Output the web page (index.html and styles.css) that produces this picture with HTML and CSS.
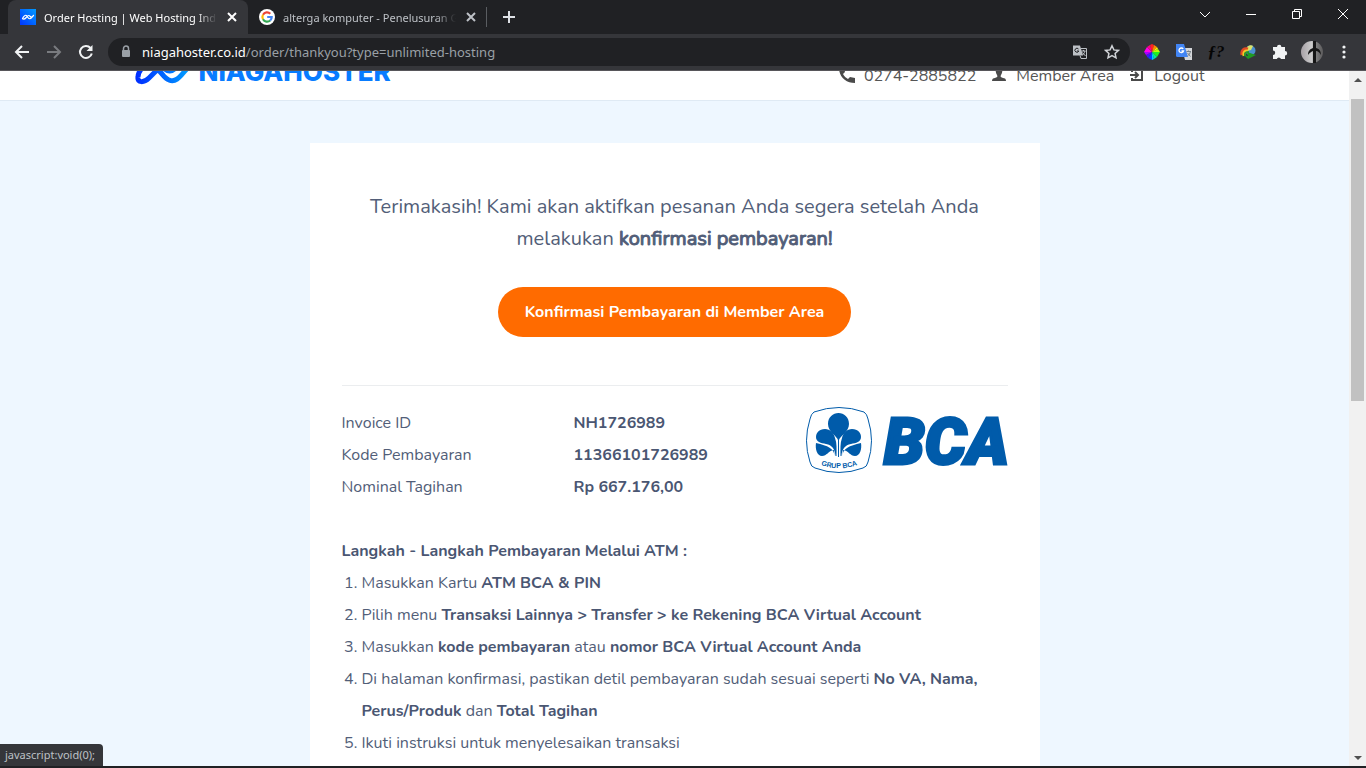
FILE: index.html
```html
<!DOCTYPE html>
<html lang="id">
<head>
<meta charset="utf-8">
<meta name="viewport" content="width=device-width, initial-scale=1">
<title>Order Hosting | Web Hosting Indonesia</title>
<link rel="stylesheet" href="styles.css">
</head>
<body>
<div class="browser">
  <header class="tabstrip">
    <div class="tab tab-active">
      <svg class="favicon" viewBox="0 0 16 16" aria-hidden="true"><defs><linearGradient id="fav" x1="0" y1="1" x2="1" y2="0"><stop offset="0" stop-color="#0034ff"/><stop offset="1" stop-color="#009bff"/></linearGradient></defs><path fill="url(#fav)" d="M0 0h16v16H0z"/><path d="M2.500 9.800c.6-1.700 2.600-4.200 3.800-3.400s1.700 3.700 3.600 3.300c1.500-.4 2.300-2 3.600-3.200M2.500 9.800c1.600 1.100 2.900-.3 3.800-1.300s1.500-2.700 3-1.800c1.200.7 2.600 2.600 4.200-.2" fill="none" stroke="#fff" stroke-width="1.200" stroke-linecap="round"/></svg>
      <span class="tab-title">Order Hosting | Web Hosting Indonesia</span>
      <button class="tab-close" aria-label="Close tab"><svg viewBox="0 0 10 10"><path d="M1 1l8 8M9 1L1 9"/></svg></button>
    </div>
    <div class="tab tab-idle">
      <svg class="favicon" viewBox="0 0 16 16" aria-hidden="true"><circle cx="8" cy="8" r="8" fill="#fff"/><g fill="none" stroke-width="2.200"><path stroke="#ea4335" d="M4 5.700A4.700 4.700 0 0 1 11.300 4.700"/><path stroke="#fbbc05" d="M4 10.300A4.700 4.700 0 0 1 4 5.700"/><path stroke="#34a853" d="M11.200 11.500A4.700 4.700 0 0 1 4 10.300"/><path stroke="#4285f4" d="M8.200 8H12.700A4.700 4.700 0 0 1 11.200 11.500"/></g></svg>
      <span class="tab-title">alterga komputer - Penelusuran Google</span>
      <button class="tab-close" aria-label="Close tab"><svg viewBox="0 0 10 10"><path d="M1 1l8 8M9 1L1 9"/></svg></button>
    </div>
    <button class="new-tab" aria-label="New tab"><svg viewBox="0 0 12 12"><path d="M6 0v12M0 6h12"/></svg></button>
    <div class="window-controls">
      <button aria-label="Search tabs"><svg viewBox="0 0 12 12"><path d="M1 4l5 5 5-5"/></svg></button>
      <button aria-label="Minimize"><svg viewBox="0 0 12 12"><path d="M1 6.500h10"/></svg></button>
      <button aria-label="Restore"><svg viewBox="0 0 12 12"><path d="M1.500 3.500h7v7h-7zM3.500 3.500v-2h7v7h-2"/></svg></button>
      <button aria-label="Close"><svg viewBox="0 0 12 12"><path d="M1 1l10 10M11 1L1 11"/></svg></button>
    </div>
  </header>

  <div class="toolbar">
    <button class="nav-button" aria-label="Back"><svg viewBox="0 0 16 16"><path d="M15 8H2M8 2L2 8l6 6"/></svg></button>
    <button class="nav-button nav-disabled" aria-label="Forward"><svg viewBox="0 0 16 16"><path d="M1 8h13M8 2l6 6-6 6"/></svg></button>
    <button class="nav-button" aria-label="Reload"><svg viewBox="0 0 16 16"><path d="M13.800 9.500A6 6 0 1 1 12.500 4"/><path class="solid" d="M14.500 1v6h-6z"/></svg></button>
    <div class="omnibox">
      <svg class="lock" viewBox="0 0 10 14" aria-hidden="true"><path d="M2.500 6V3.500a2.500 2.500 0 0 1 5 0V6" fill="none" stroke="#9aa0a6" stroke-width="1.500"/><rect x="1" y="5" width="8" height="7" rx="1" fill="#9aa0a6"/></svg>
      <div class="url"><span class="host">niagahoster.co.id</span>/order/thankyou?type=unlimited-hosting</div>
      <button class="omni-button" aria-label="Translate"><svg viewBox="0 0 16 16"><path d="M9 4.500h5.500v10H9l-1-3" fill="none" stroke="#bdc1c6"/><path fill="#bdc1c6" d="M1 1.500h7l3 10H1z"/><path d="M6.500 5a2 2 0 1 0 .3 2H5" fill="none" stroke="#202124"/><path d="M9.500 7h4M11.500 6v1M13 7c-.5 2-1.500 3-2.500 4M10.500 8.500l3 3.500" fill="none" stroke="#bdc1c6"/></svg></button>
      <button class="omni-button" aria-label="Bookmark"><svg viewBox="0 0 16 16"><path fill="none" stroke="#d0d3d7" stroke-width="1.500" d="M8 1.800l1.900 4.100 4.500.5-3.300 3 .9 4.500L8 11.700l-4 2.200.9-4.500-3.300-3 4.500-.5z"/></svg></button>
    </div>
    <div class="extensions">
      <button aria-label="Color picker"><svg viewBox="0 0 16 16"><path fill="#f22" d="M8 8L6 1l2-1 2 1z"/><path fill="#f80" d="M8 8l2-7 3 2z"/><path fill="#fe0" d="M8 8l5-5 1 2z"/><path fill="#bf0" d="M8 8l6-3 2 3z"/><path fill="#2e2" d="M8 8h8l-3 5z"/><path fill="#0e9" d="M8 8l5 5-3 2z"/><path fill="#0cf" d="M8 8l2 7-2 1z"/><path fill="#04f" d="M8 8v8l-4-2z"/><path fill="#41f" d="M8 8l-4 6-2-3z"/><path fill="#a0f" d="M8 8l-6 3-2-3z"/><path fill="#f0e" d="M8 8H0l3-5z"/><path fill="#f08" d="M8 8L3 3l3-2z"/></svg></button>
      <button aria-label="Google Translate"><svg viewBox="0 0 16 16"><path fill="#d5d7da" d="M6 4h10v12H9z"/><path fill="#4285f4" d="M0 0h8l4 13H1.500Q0 13 0 11.500z"/><path d="M7.200 5A2.300 2.300 0 1 0 7.500 7H5.500" fill="none" stroke="#fff" stroke-width="1.300"/><path d="M10.500 7.500H15M12.500 6.500v1M14.500 7.500c-.5 2-1.500 3.500-3 4.500M11.500 9l3 3.500" fill="none" stroke="#78828a"/></svg></button>
      <button class="font-finder" aria-label="Font finder">ƒ?</button>
      <button aria-label="Download manager"><svg viewBox="0 0 16 16"><circle cx="10.500" cy="6.500" r="5" fill="#4a8fd0"/><path fill="#d8e36a" d="M7 3c2-2 5-2 6-1l-2 4-4 1z"/><path d="M2 11C1 6 4 4 8 5" fill="none" stroke="#e24b24" stroke-width="3"/><path d="M3.500 12C2.500 8 4.500 6 8 6.500" fill="none" stroke="#f5cb23" stroke-width="2"/><path d="M5 12C4.500 9.500 6 8 9 8" fill="none" stroke="#2b9a32" stroke-width="2"/><path fill="#1f9a22" d="M4 11l4 1-1-4 9 3-8 4z"/></svg></button>
      <button aria-label="Extensions"><svg viewBox="0 0 16 16"><path fill="#f1f3f4" d="M1 3h4a2.200 2.200 0 1 1 4.400 0H13v4a2.200 2.200 0 1 1 0 4.400V15H9a2.200 2.200 0 0 0-4.200 0H1v-4a2.200 2.200 0 0 0 0-4.400z"/></svg></button>
      <button class="avatar" aria-label="Profile"><svg viewBox="0 0 22 22"><defs><linearGradient id="av"><stop offset="0" stop-color="#a7a1a6"/><stop offset=".5" stop-color="#ccc"/><stop offset=".6" stop-color="#888"/><stop offset="1" stop-color="#5b5a5b"/></linearGradient></defs><circle cx="11" cy="11" r="11" fill="url(#av)"/><path d="M12 0h3v7c4 1 5 4 5 7-2-3-3-4-5-4v12h-3V10c-2 1-4 2-5 4 0-4 2-6 5-7z" fill="#161616"/></svg></button>
      <button aria-label="Menu"><svg viewBox="0 0 16 16"><g fill="#f1f3f4"><circle cx="8" cy="3" r="1.600"/><circle cx="8" cy="8" r="1.600"/><circle cx="8" cy="13" r="1.600"/></g></svg></button>
    </div>
  </div>

  <div class="viewport">
    <div class="page">
      <header class="site-header">
        <div class="site-bar">
          <a class="brand" href="#" aria-label="Niagahoster">
            <svg class="brand-mark" viewBox="0 0 54 32" aria-hidden="true"><defs><linearGradient id="mark"><stop offset="0" stop-color="#0030ff"/><stop offset="1" stop-color="#009dff"/></linearGradient></defs><path d="M3 21C2 27 9 27 14 22L21 15C25 12 28 22 34 24C43 28 48 15 54 11M3 21C3 14 12 6 18 6C25 5 29 16 35 15C40 15 42 9 47 6" fill="none" stroke="url(#mark)" stroke-width="5"/></svg>
            <span>NIAGAHOSTER</span>
          </a>
          <nav class="site-nav">
            <a href="#"><svg viewBox="0 0 16 16"><path d="M0 0C0 9 7 15 16 15v-5l-5-1-2 2C7 10 5 8 4 6l2-2-1-4z"/></svg>0274-2885822</a>
            <a href="#"><svg viewBox="0 0 16 16"><path d="M8 0c-4 0-4 4-2 7 1 2 0 2-2 3-2 0-3 1-3 3h14c0-2-1-3-3-3-2-1-3-1-2-3 2-3 2-7-2-7z"/></svg>Member Area</a>
            <a href="#"><svg viewBox="0 0 16 16"><path class="line" d="M3 4V1h10v11H3v-2M1 7h8M6 4l3 3-3 3"/></svg>Logout</a>
          </nav>
        </div>
      </header>

      <main class="card">
        <p class="thanks">Terimakasih! Kami akan aktifkan pesanan Anda segera setelah Anda melakukan <strong>konfirmasi pembayaran!</strong></p>
        <button class="confirm">Konfirmasi Pembayaran di Member Area</button>
        <section class="invoice">
          <table>
            <tr><th scope="row">Invoice ID</th><td>NH1726989</td></tr>
            <tr><th scope="row">Kode Pembayaran</th><td>11366101726989</td></tr>
            <tr><th scope="row">Nominal Tagihan</th><td>Rp 667.176,00</td></tr>
          </table>
          <svg class="bank" viewBox="0 0 202 68" role="img" aria-label="BCA">
            <path d="M8 5Q33-4 58 5Q61 7 62 12Q69 34 62 55Q61 60 57 61Q33 70 9 61Q5 60 4 55Q-3 34 4 12Q5 7 8 5z" fill="#fff" stroke="#005baa"/>
            <g fill="#005baa">
              <path d="M32 50V33C31 29 22 25 22 17C22 10 27 6 32.500 6S43 10 43 17C43 25 34 29 33 33V50z"/>
              <path d="M30.500 49C30.500 42 31 36 29 31C28 26 24 22 19 22C13 22 10 26 10 30C10 35 15 36 20 37C26 38 29 42 29.500 49z"/>
              <path d="M34.500 49C34.500 42 34 36 36 31C37 26 41 22 46 22C52 22 55 26 55 30C55 35 50 36 45 37C39 38 36 42 35.500 49z"/>
              <path d="M28.500 49C28 41 22 39 10 36C9 42 11 49 16 49C21 49 22 44 28 43z"/>
              <path d="M36.500 49C37 41 43 39 55 36C56 42 54 49 49 49C44 49 43 44 37 43z"/>
            </g>
            <path id="arc" d="M15 58Q33 65 54 57" fill="none"/>
            <text class="group-name"><textPath href="#arc">GRUP BCA</textPath></text>
            <text class="bank-name" x="78" y="57">BCA</text>
          </svg>
        </section>
        <h2>Langkah - Langkah Pembayaran Melalui ATM :</h2>
        <ol>
          <li>Masukkan Kartu <b>ATM BCA &amp; PIN</b></li>
          <li>Pilih menu <b>Transaksi Lainnya &gt; Transfer &gt; ke Rekening BCA Virtual Account</b></li>
          <li>Masukkan <b>kode pembayaran</b> atau <b>nomor BCA Virtual Account Anda</b></li>
          <li>Di halaman konfirmasi, pastikan detil pembayaran sudah sesuai seperti <b>No VA, Nama, Perus/Produk</b> dan <b>Total Tagihan</b></li>
          <li>Ikuti instruksi untuk menyelesaikan transaksi</li>
        </ol>
      </main>
    </div>
    <div class="scrollbar" aria-hidden="true">
      <svg viewBox="0 0 17 17"><path d="M5 11l4-4 4 4z"/></svg>
      <div class="track"><div class="thumb"></div></div>
      <svg viewBox="0 0 17 17"><path d="M5 7l4 4 4-4z"/></svg>
    </div>
    <div class="status">javascript:void(0);</div>
  </div>
  <div class="taskbar"></div>
</div>
</body>
</html>
```
FILE: styles.css
```css
* { box-sizing: border-box; }
body { margin: 0; font-family: Nunito, Lato, "Open Sans", sans-serif; }
button { margin: 0; padding: 0; border: 0; background: none; color: inherit; font: inherit; display: flex; align-items: center; justify-content: center; }
a { color: inherit; text-decoration: none; }
svg { display: block; flex: none; }
.browser { display: flex; flex-direction: column; height: 100vh; overflow: hidden; }
.tabstrip, .toolbar, .status { font-family: "Segoe UI", "Noto Sans", sans-serif; }

.tabstrip { display: flex; flex: none; height: 34px; background: #202124; padding-left: 8px; color: #fff; }
.tab { display: flex; align-items: center; gap: 8px; width: 240px; padding: 0 9px 0 12px; font-size: 11px; }
.tab-active { background: #35363a; border-radius: 8px 8px 0 0; }
.tab-idle { width: 239px; padding: 0 8px 0 11px; height: 20px; margin-top: 7px; border-right: 1px solid #5a5d61; color: #bdc1c6; }
.favicon { width: 16px; height: 16px; }
.tab-title { flex: 1; min-width: 0; overflow: hidden; white-space: nowrap; mask-image: linear-gradient(to right, #000 88%, transparent); }
.tab-close { width: 14px; height: 16px; }
.tab-close svg { width: 10px; height: 10px; }
.tab-close path, .new-tab path { fill: none; stroke: currentColor; stroke-width: 2; }
.new-tab { width: 44px; height: 34px; color: #dee1e6; }
.new-tab svg { width: 12px; height: 12px; }
.window-controls { display: flex; margin-left: auto; height: 28px; }
.window-controls button { width: 46px; }
.window-controls svg { width: 12px; height: 12px; }
.window-controls path { fill: none; stroke: #fff; }

.toolbar { display: flex; flex: none; align-items: center; height: 37px; padding: 0 14px; background: #35363a; border-bottom: 1px solid #57565a; }
.nav-button { width: 16px; height: 28px; margin-right: 16px; color: #f1f3f4; }
.nav-button svg { width: 16px; height: 16px; }
.nav-button path { fill: none; stroke: currentColor; stroke-width: 2; }
.nav-button .solid { fill: currentColor; stroke: none; }
.nav-disabled { color: #797b7f; }
.omnibox { display: flex; flex: 1; min-width: 0; align-items: center; height: 28px; margin: 0 14px 0 -2px; padding: 0 10px 0 13px; border-radius: 14px; background: #202124; }
.lock { width: 10px; height: 14px; margin-right: 11px; }
.url { flex: 1; min-width: 0; overflow: hidden; white-space: nowrap; font-size: 13px; color: #9aa0a6; }
.host { color: #fff; }
.omni-button { width: 16px; margin-left: 16px; }
.omni-button svg, .extensions svg { width: 16px; height: 16px; }
.extensions { display: flex; align-items: center; gap: 16px; }
.extensions button { width: 16px; height: 22px; }
.extensions .font-finder { color: #050505; font: italic bold 17px "Liberation Serif", serif; }
.extensions .avatar svg { width: 22px; height: 22px; }

.viewport { display: flex; position: relative; flex: 1; min-height: 0; }
.page { flex: 1; min-width: 0; overflow: hidden; background: #eef7ff; }
.site-header { height: 30px; margin-bottom: 42px; overflow: hidden; background: #fff; border-bottom: 1px solid #dfeaf4; }
.site-bar { display: flex; justify-content: space-between; align-items: flex-end; max-width: 1110px; height: 30px; margin: 0 auto; padding: 0 25px 13px 15px; }
.brand { display: flex; align-items: center; height: 32px; gap: 10px; color: #087cff; font: 800 26px/32px Inter, sans-serif; }
.brand-mark { width: 54px; height: 32px; }
.site-nav { display: flex; gap: 15px; height: 24px; color: #555; font-size: 16px; line-height: 24px; font-weight: 400; }
.site-nav a { display: flex; align-items: center; gap: 9px; }
.site-nav svg { width: 16px; height: 16px; fill: #4a4a4a; }
.site-nav .line { fill: none; stroke: #4a4a4a; stroke-width: 2; }

.card { max-width: 730px; min-height: 800px; margin: 0 auto; padding: 48px 32px 32px; background: #fff; color: #525e78; font-size: 16px; line-height: 32px; font-weight: 400; }
.thanks { max-width: 640px; margin: 0 auto 32px; text-align: center; font-size: 20px; }
.thanks strong { font-weight: 400; -webkit-text-stroke: 1px currentColor; }
.confirm { height: 50px; margin: 0 auto 48px; padding: 0 27px; border-radius: 25px; background: #ff6b00; color: #fff; font-weight: 700; }
.invoice { display: flex; justify-content: space-between; padding-top: 21px; border-top: 1px solid #ebedef; }
table { border-collapse: collapse; }
th, td { padding: 0; text-align: left; }
th { width: 232px; font-weight: 400; }
td, h2, b { font-weight: 700; color: #4a5672; }
.bank { width: 202px; height: 68px; overflow: visible; }
.group-name { font: bold 7px "Liberation Sans", sans-serif; fill: #005baa; }
.bank-name { font: italic 900 65px Roboto, sans-serif; fill: #005baa; stroke: #005baa; stroke-width: 3px; }
h2 { margin: 32px 0 0; font-size: 16px; }
ol { margin: 0; padding-left: 20px; }

.scrollbar { display: flex; flex-direction: column; width: 17px; background: #f1f1f1; }
.scrollbar svg { width: 17px; height: 17px; fill: #505050; }
.track { flex: 1; padding: 11px 2px 0; }
.thumb { height: 302px; background: #c1c1c1; }
.status { position: absolute; left: 0; bottom: 0; padding: 0 8px 0 5px; height: 22px; line-height: 22px; border-radius: 0 4px 0 0; background: #35363a; color: #bdc1c6; font-size: 11px; }
.taskbar { flex: none; height: 2px; background: #202124; }
```
